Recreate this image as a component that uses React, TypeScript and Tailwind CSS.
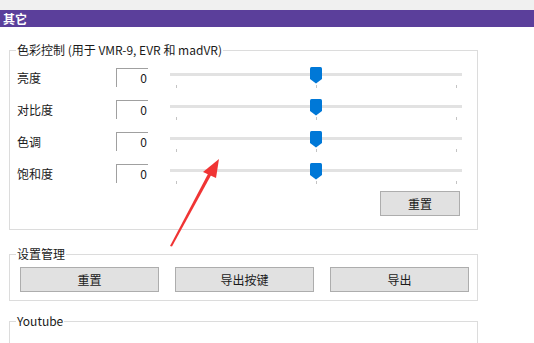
import React from 'react';

const font = { fontFamily: '"Noto Sans CJK SC", "Liberation Sans", sans-serif' };

const rows = ['亮度', '对比度', '色调', '饱和度'];

// one slider: grey track, three ticks, blue pointer thumb in the middle
const Slider: React.FC = () => (
  <div className="relative ml-[22px] h-[19px] w-[292px]">
    <div className="absolute left-0 right-0 top-[5px] h-[3px] bg-[#e2e2e2]" />
    <div className="absolute left-[6px] top-[17px] h-[3px] w-px bg-[#c4c4c4]" />
    <div className="absolute left-[146px] top-[17px] h-[3px] w-px bg-[#c4c4c4]" />
    <div className="absolute left-[286px] top-[17px] h-[3px] w-px bg-[#c4c4c4]" />
    <svg className="absolute left-[140px] top-[-1px]" width="12" height="17" viewBox="0 0 12 17">
      <path d="M1.5 0 H10.5 Q12 0 12 1.5 V12 L6 16.5 L0 12 V1.5 Q0 0 1.5 0 Z" fill="#0078d7" />
    </svg>
  </div>
);

const Button: React.FC<{ label: string; className?: string }> = ({ label, className }) => (
  <button
    className={`h-[25px] border border-[#adadad] bg-[#e1e1e1] text-[12px] text-[#1a1a1a] ${className ?? ''}`}
  >
    {label}
  </button>
);

export default function App() {
  return (
    <div className="relative h-[343px] w-[534px] overflow-hidden bg-white text-[12px] text-[#1a1a1a]" style={font}>
      <div className="h-[10px] bg-[#f0f0f0]" />
      <div className="h-[17px] bg-[#5b3f9b] pl-[3px] text-[12px] font-bold leading-[17px] text-white">其它</div>

      {/* 色彩控制 */}
      <fieldset className="ml-[9px] mt-[16px] w-[469px] border border-[#dcdcdc] px-[6px] pb-[13px]">
        <legend className="px-[1px] leading-[14px]">色彩控制 (用于 VMR-9, EVR 和 madVR)</legend>
        <div className="flex flex-col gap-[13px] pt-[11px]">
          {rows.map((r) => (
            <div key={r} className="flex h-[19px] items-start">
              <div className="w-[100px] pl-[1px] leading-[19px]">{r}</div>
              <div className="h-[19px] w-[32px] border-l border-t border-[#a0a0a0] pr-[1px] text-right leading-[18px]">0</div>
              <Slider />
            </div>
          ))}
        </div>
        <Button label="重置" className="ml-[364px] mt-[8px] w-[80px]" />
      </fieldset>

      {/* 设置管理 */}
      <fieldset className="ml-[9px] mt-[17px] w-[469px] border border-[#dcdcdc] px-[6px] pb-[8px]">
        <legend className="px-[1px] leading-[14px]">设置管理</legend>
        <div className="ml-[4px] flex gap-[16px] pt-[6px]">
          <Button label="重置" className="w-[139px]" />
          <Button label="导出按键" className="w-[139px]" />
          <Button label="导出" className="w-[139px]" />
        </div>
      </fieldset>

      {/* Youtube */}
      <fieldset className="ml-[9px] mt-[13px] h-[60px] w-[469px] border border-[#dcdcdc] px-[6px]">
        <legend className="px-[1px] leading-[14px]">Youtube</legend>
      </fieldset>

      {/* red annotation arrow */}
      <svg className="pointer-events-none absolute left-0 top-0" width="534" height="343">
        <path d="M170 246 L209 172 L212 173.5 L172 246.5 Z" fill="#f03434" />
        <path d="M219 159 L203 172 L216 178 Z" fill="#f03434" />
      </svg>
    </div>
  );
}
